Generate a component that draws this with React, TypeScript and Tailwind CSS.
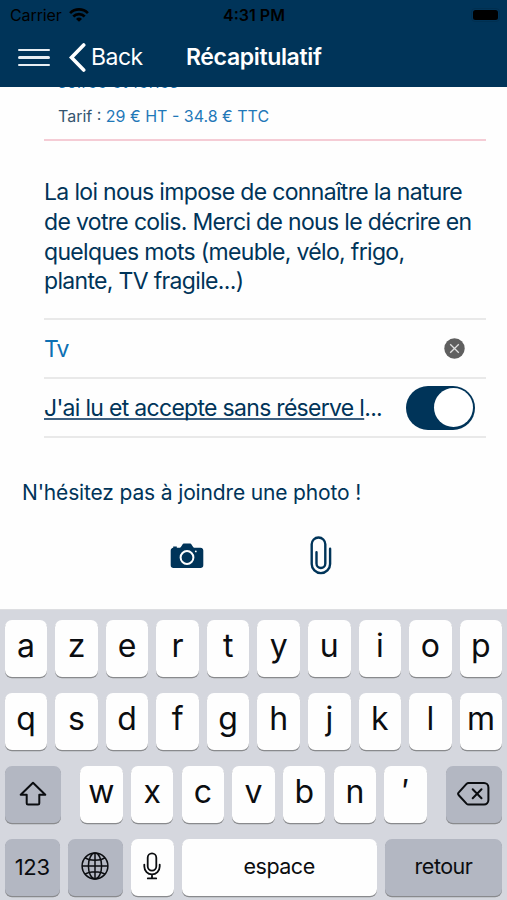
import React from 'react';
import clsx from 'clsx';

const rows = [
  ['a', 'z', 'e', 'r', 't', 'y', 'u', 'i', 'o', 'p'],
  ['q', 's', 'd', 'f', 'g', 'h', 'j', 'k', 'l', 'm'],
];

const thirdRow = ['w', 'x', 'c', 'v', 'b', 'n', '′'];

const WifiIcon = () => (
  <svg width="20" height="14" viewBox="0 0 20 14" fill="none" stroke="#000" strokeWidth="2.7">
    <path d="M1.1 5.1a12.6 12.6 0 0 1 17.8 0" />
    <path d="M4.3 8.5a8 8 0 0 1 11.4 0" />
    <path d="M10 13.7 7 10.9a4.3 4.3 0 0 1 6 0Z" fill="#000" stroke="none" />
  </svg>
);

const CameraIcon = () => (
  <svg width="34" height="26" viewBox="0 0 34 26">
    <path
      d="M3.2 4.8V3.6h3.6v1.2h2.4c1 0 1.5-.5 2-1.3l1-1.6C12.8 1 13.4.6 14.4.6h5.2c1 0 1.6.4 2.2 1.3l1 1.6c.5.8 1 1.3 2 1.3h5.7c1.7 0 2.8 1.1 2.8 2.8v14.6c0 1.7-1.1 2.8-2.8 2.8h-27C1.8 25 .7 23.9.7 22.2V7.6c0-1.6 1-2.6 2.5-2.8Z"
      fill="#003459"
    />
    <circle cx="17" cy="14.5" r="6.4" fill="#003459" stroke="#fff" strokeWidth="2" />
    <circle cx="25.8" cy="8.4" r="0.9" fill="#fff" />
  </svg>
);

const ClipIcon = () => (
  <svg width="22" height="39" viewBox="0 0 22 39" fill="none" stroke="#003459" strokeWidth="2.4" strokeLinecap="round">
    <path d="M6.5 16.2v11.4a4.4 4.4 0 0 0 8.8 0V8.3a6.8 6.8 0 0 0-13.6 0v19.6a9.2 9.2 0 0 0 18.4 0V12.8" />
  </svg>
);

const ShiftIcon = () => (
  <svg width="28" height="26" viewBox="0 0 28 26" fill="none" stroke="#0b0d10" strokeWidth="2" strokeLinejoin="round">
    <path d="M14 1.8 26.3 13.7H20.3V22.2a1.3 1.3 0 0 1-1.3 1.3H9a1.3 1.3 0 0 1-1.3-1.3V13.7H1.7Z" />
  </svg>
);

const DeleteIcon = () => (
  <svg width="34" height="26" viewBox="0 0 34 26" fill="none" stroke="#0b0d10" strokeWidth="2" strokeLinejoin="round" strokeLinecap="round">
    <path d="M11.6 2H27a4.4 4.4 0 0 1 4.4 4.4v12.7a4.4 4.4 0 0 1-4.4 4.4H11.6a3 3 0 0 1-2.1-.9L1.8 14.2a2 2 0 0 1 0-2.8l7.7-8.5a3 3 0 0 1 2.1-.9Z" />
    <path d="m15.7 8.2 8.8 9m0-9-8.8 9" />
  </svg>
);

const GlobeIcon = () => (
  <svg width="28" height="28" viewBox="0 0 28 28" fill="none" stroke="#0b0d10" strokeWidth="1.5">
    <circle cx="14" cy="14" r="12.9" />
    <ellipse cx="14" cy="14" rx="6.6" ry="12.9" />
    <path d="M14 1v26M1 14h26M4 5.8c5 3.2 15 3.2 20 0M4 22.2c5-3.2 15-3.2 20 0" />
  </svg>
);

const MicIcon = () => (
  <svg width="18" height="28" viewBox="0 0 18 28" fill="none" stroke="#0b0d10" strokeWidth="1.8" strokeLinecap="round">
    <rect x="4.7" y="1.4" width="8.6" height="17.2" rx="4.3" />
    <path d="M1.3 12.6v2a7.7 7.7 0 0 0 15.4 0v-2M9 22.3v4M4.8 26.4h8.4" />
  </svg>
);

interface KeyProps {
  children: React.ReactNode;
  className?: string;
  dark?: boolean;
}

const Key = ({ children, className, dark }: KeyProps) => (
  <button
    className={clsx(
      'flex h-[57px] shrink-0 items-center justify-center rounded-[7px] text-[#0b0d10] shadow-[0_1.3px_0_#898a8d]',
      dark ? 'bg-[#b3b7c2]' : 'bg-[#fefefe]',
      className
    )}
  >
    {children}
  </button>
);

const Letter = ({ char }: { char: string }) => (
  <Key className="w-[42.6px]">
    <span className="-mt-[5px] text-[32px] leading-[40px] font-normal">{char}</span>
  </Key>
);

const Keyboard = () => (
  <div className="flex h-[291px] flex-col gap-4 border-t border-[#dddee1] bg-[#d5d7de] px-[4.7px] pt-[10px]">
    {rows.map((row, i) => (
      <div key={i} className="flex justify-between">
        {row.map((char) => (
          <Letter key={char} char={char} />
        ))}
      </div>
    ))}
    <div className="flex justify-between">
      <Key dark className="w-[56.5px] pb-[2px]">
        <ShiftIcon />
      </Key>
      <div className="flex gap-[8.1px]">
        {thirdRow.map((char) => (
          <Letter key={char} char={char} />
        ))}
      </div>
      <Key dark className="w-[56.5px] pb-[2px]">
        <DeleteIcon />
      </Key>
    </div>
    <div className="flex justify-between">
      <Key dark className="w-[55px] pb-[1px] text-[22px] tracking-[-0.3px]">123</Key>
      <Key dark className="w-[55px] pb-[3px]">
        <GlobeIcon />
      </Key>
      <Key className="w-[42.6px] pb-[3px]">
        <MicIcon />
      </Key>
      <Key className="w-[195px] pb-[3px] text-[21.5px] tracking-[-0.5px]">espace</Key>
      <Key dark className="w-[117.6px] pb-[3px] text-[21.5px] tracking-[-0.5px]">retour</Key>
    </div>
  </div>
);

const Header = () => (
  <header className="relative z-10 h-[87px] shrink-0 bg-[#003459]">
    <div className="grid h-[29px] grid-cols-3 items-center pr-[9px] pl-[10px] text-[16px] text-black">
      <div className="flex items-center gap-[7px]">
        <span className="tracking-[-0.1px]">Carrier</span>
        <WifiIcon />
      </div>
      <span className="text-center font-semibold">4:31 PM</span>
      <div className="flex justify-end">
        <div className="-mr-[2px] flex h-[14px] w-[29px] items-center justify-center rounded-[4px] border border-[#002f50]">
          <div className="h-[10px] w-[25px] rounded-[2.5px] bg-black" />
        </div>
      </div>
    </div>
    <div className="flex h-[57px] items-center pl-[18px] text-white">
      <div className="flex w-8 flex-col gap-[5.5px]">
        <span className="h-[2.3px] rounded-full bg-[#e8eef3]" />
        <span className="h-[2.3px] rounded-full bg-[#e8eef3]" />
        <span className="h-[2.3px] rounded-full bg-[#e8eef3]" />
      </div>
      <svg className="ml-[19px]" width="17" height="29" viewBox="0 0 17 29" fill="none" stroke="#fff" strokeWidth="3.6" strokeLinecap="round">
        <path d="M14.7 2 2.5 14.5l12.2 12.5" />
      </svg>
      <span className="ml-[5px] w-[95px] text-[23px] tracking-[-0.5px]">Back</span>
      <h1 className="text-[23px] font-semibold tracking-[-0.35px]">Récapitulatif</h1>
    </div>
  </header>
);

const App = () => {
  return (
    <div className="flex h-[900px] w-[507px] flex-col overflow-hidden bg-[#fefefe] font-['Inter',sans-serif] text-[#003459]">
      <Header />
      <main className="flex-1">
        <section className="mr-[21px] ml-[44px] flow-root h-[54px] border-b-2 border-[#f5ccd5] pl-[14px] text-[16px]">
          {/* scrolled under the header, only the baseline stays visible */}
          <p className="-mt-[16px] h-[33px] leading-[22px] tracking-[0.5px] text-[#0d70b3]">soirée et fériés</p>
          <p className="leading-6">
            <span className="text-[#35556f]">Tarif : </span>
            <span className="text-[#1f78b8]">29 € HT - 34.8 € TTC</span>
          </p>
        </section>

        <section className="mr-[21px] ml-[44px] text-[23px]">
          <p className="h-[179px] border-b-2 border-[#e9e9e9] pt-[37px] leading-[29.8px] tracking-[-0.67px]">
            La loi nous impose de connaître la nature<br />
            de votre colis. Merci de nous le décrire en<br />
            quelques mots (meuble, vélo, frigo,<br />
            plante, TV fragile...)
          </p>
          <div className="flex h-[59px] items-center justify-between border-b-2 border-[#e9e9e9] pr-[21px]">
            <span className="pt-[2px] tracking-[-0.9px] text-[#0d70b3]">Tv</span>
            <svg width="21" height="21" viewBox="0 0 21 21">
              <circle cx="10.5" cy="10.5" r="10.2" fill="#5f5f5f" />
              <path d="m6.2 6.2 8.6 8.6m0-8.6-8.6 8.6" stroke="#e0e0e0" strokeWidth="1.3" />
            </svg>
          </div>
          <div className="flex h-[59px] items-center justify-between border-b-2 border-[#e9e9e9] pr-[11px]">
            <span className="pt-[2px] tracking-[-0.7px] whitespace-nowrap">
              <span className="underline decoration-[#3e6080] decoration-2 underline-offset-2 [text-decoration-skip-ink:none]">J'ai lu et accepte sans réserve l</span>...
            </span>
            <div className="flex h-[44px] w-[69px] items-center justify-end rounded-full bg-[#003459] pr-[2px]">
              <div className="h-[39px] w-[39px] rounded-full bg-white" />
            </div>
          </div>
        </section>

        <p className="mt-[42px] ml-[22px] text-[21px] leading-[26px] tracking-[-0.15px]">N'hésitez pas à joindre une photo !</p>
        <div className="mt-[30px] ml-[170px] flex items-center gap-[106px]">
          <CameraIcon />
          <ClipIcon />
        </div>
      </main>
      <Keyboard />
    </div>
  );
};

export default App;
